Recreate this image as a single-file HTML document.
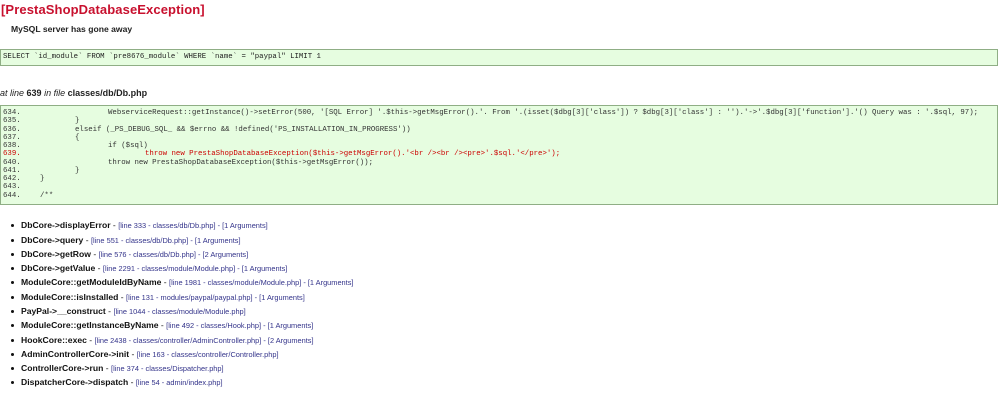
<!DOCTYPE html>
<html><head><meta charset="utf-8"><style>
body{margin:0;width:1000px;height:415px;background:#fff;font-family:"Liberation Sans",sans-serif;position:relative;overflow:hidden}
.a{position:absolute;white-space:pre}
h1{position:absolute;left:1px;top:2px;margin:0;font-size:13px;color:#c8102e;font-weight:bold;letter-spacing:0.1px}
.box{position:absolute;left:0;width:996px;background:#e6fde0;border:1px solid #8fae85}
.m{font-family:"Liberation Mono",monospace;font-size:7.37px;color:#333}
.r{color:#c00}
.li{position:absolute;left:11px;font-size:8.6px;color:#111;white-space:pre}
.li b{font-weight:bold}
.li span{font-size:7.4px;color:#33338a}
.li:before{content:"";position:absolute;left:0;top:4px;width:3px;height:3px;border-radius:50%;background:#111}
.li .t{position:absolute;left:10px;top:0}
</style></head><body>
<h1>[PrestaShopDatabaseException]</h1>
<div class="a" style="left:11px;top:24px;font-size:8.6px;font-weight:bold;color:#222">MySQL server has gone away</div>
<div class="box" style="top:49px;height:15px"></div>
<div class="a m" style="left:3px;top:53px;color:#222">SELECT `id_module` FROM `pre8676_module` WHERE `name` = "paypal" LIMIT 1</div>
<div class="a" style="left:0;top:88px;font-size:9px;color:#222"><i>at line</i> <b>639</b> <i>in file</i> <b>classes/db/Db.php</b></div>
<div class="box" style="top:105px;height:98px"></div>
<div class="m">
<div class="a" style="left:3px;top:109px">634.</div><div class="a" style="left:108px;top:109px">WebserviceRequest::getInstance()->setError(500, '[SQL Error] '.$this->getMsgError().'. From '.(isset($dbg[3]['class']) ? $dbg[3]['class'] : '').'->'.$dbg[3]['function'].'() Query was : '.$sql, 97);</div>
<div class="a" style="left:3px;top:117px">635.</div><div class="a" style="left:75px;top:117px">}</div>
<div class="a" style="left:3px;top:125.5px">636.</div><div class="a" style="left:75px;top:125.5px">elseif (_PS_DEBUG_SQL_ &amp;&amp; $errno &amp;&amp; !defined('PS_INSTALLATION_IN_PROGRESS'))</div>
<div class="a" style="left:3px;top:134px">637.</div><div class="a" style="left:75px;top:134px">{</div>
<div class="a" style="left:3px;top:142px">638.</div><div class="a" style="left:108px;top:142px">if ($sql)</div>
<div class="a r" style="left:3px;top:150px">639.</div><div class="a r" style="left:145px;top:150px">throw new PrestaShopDatabaseException($this->getMsgError().'&lt;br /&gt;&lt;br /&gt;&lt;pre&gt;'.$sql.'&lt;/pre&gt;');</div>
<div class="a" style="left:3px;top:158.5px">640.</div><div class="a" style="left:108px;top:158.5px">throw new PrestaShopDatabaseException($this->getMsgError());</div>
<div class="a" style="left:3px;top:167px">641.</div><div class="a" style="left:75px;top:167px">}</div>
<div class="a" style="left:3px;top:175px">642.</div><div class="a" style="left:40px;top:175px">}</div>
<div class="a" style="left:3px;top:183px">643.</div>
<div class="a" style="left:3px;top:191.5px">644.</div><div class="a" style="left:40px;top:191.5px">/**</div>
</div>
<div class="li" style="top:220px"><div class="t"><b>DbCore-&gt;displayError</b> - <span>[line 333 - classes/db/Db.php] - [1 Arguments]</span></div></div>
<div class="li" style="top:234.5px"><div class="t"><b>DbCore-&gt;query</b> - <span>[line 551 - classes/db/Db.php] - [1 Arguments]</span></div></div>
<div class="li" style="top:248.8px"><div class="t"><b>DbCore-&gt;getRow</b> - <span>[line 576 - classes/db/Db.php] - [2 Arguments]</span></div></div>
<div class="li" style="top:263px"><div class="t"><b>DbCore-&gt;getValue</b> - <span>[line 2291 - classes/module/Module.php] - [1 Arguments]</span></div></div>
<div class="li" style="top:277.3px"><div class="t"><b>ModuleCore::getModuleIdByName</b> - <span>[line 1981 - classes/module/Module.php] - [1 Arguments]</span></div></div>
<div class="li" style="top:291.6px"><div class="t"><b>ModuleCore::isInstalled</b> - <span>[line 131 - modules/paypal/paypal.php] - [1 Arguments]</span></div></div>
<div class="li" style="top:305.9px"><div class="t"><b>PayPal-&gt;__construct</b> - <span>[line 1044 - classes/module/Module.php]</span></div></div>
<div class="li" style="top:320.2px"><div class="t"><b>ModuleCore::getInstanceByName</b> - <span>[line 492 - classes/Hook.php] - [1 Arguments]</span></div></div>
<div class="li" style="top:334.5px"><div class="t"><b>HookCore::exec</b> - <span>[line 2438 - classes/controller/AdminController.php] - [2 Arguments]</span></div></div>
<div class="li" style="top:348.8px"><div class="t"><b>AdminControllerCore-&gt;init</b> - <span>[line 163 - classes/controller/Controller.php]</span></div></div>
<div class="li" style="top:363.1px"><div class="t"><b>ControllerCore-&gt;run</b> - <span>[line 374 - classes/Dispatcher.php]</span></div></div>
<div class="li" style="top:377.4px"><div class="t"><b>DispatcherCore-&gt;dispatch</b> - <span>[line 54 - admin/index.php]</span></div></div>
</body></html>
